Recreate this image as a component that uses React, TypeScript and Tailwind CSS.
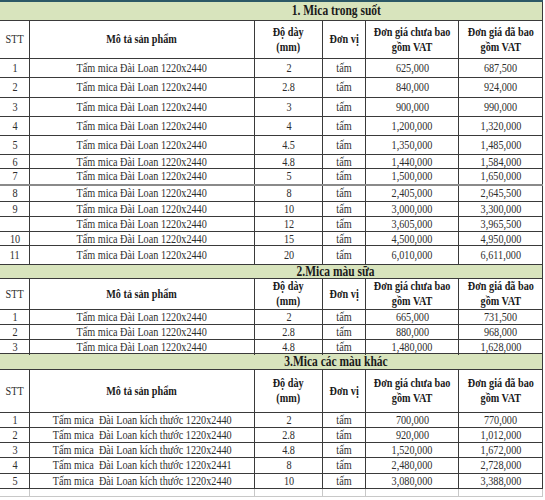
type Row = { stt: string; desc: string; thick: string; price: string; vat: string; h: string };

const cols = "grid grid-cols-[30px_225px_68px_43px_93px_84px]";

const mica1: Row[] = [
  { stt: "1", desc: "Tấm mica Đài Loan 1220x2440", thick: "2", price: "625,000", vat: "687,500", h: "h-[19px]" },
  { stt: "2", desc: "Tấm mica Đài Loan 1220x2440", thick: "2.8", price: "840,000", vat: "924,000", h: "h-[20px]" },
  { stt: "3", desc: "Tấm mica Đài Loan 1220x2440", thick: "3", price: "900,000", vat: "990,000", h: "h-[19px]" },
  { stt: "4", desc: "Tấm mica Đài Loan 1220x2440", thick: "4", price: "1,200,000", vat: "1,320,000", h: "h-[19px]" },
  { stt: "5", desc: "Tấm mica Đài Loan 1220x2440", thick: "4.5", price: "1,350,000", vat: "1,485,000", h: "h-[19px]" },
  { stt: "6", desc: "Tấm mica Đài Loan 1220x2440", thick: "4.8", price: "1,440,000", vat: "1,584,000", h: "h-[14px]" },
  { stt: "7", desc: "Tấm mica Đài Loan 1220x2440", thick: "5", price: "1,500,000", vat: "1,650,000", h: "h-[17px]" },
  { stt: "8", desc: "Tấm mica Đài Loan 1220x2440", thick: "8", price: "2,405,000", vat: "2,645,500", h: "h-[16px]" },
  { stt: "9", desc: "Tấm mica Đài Loan 1220x2440", thick: "10", price: "3,000,000", vat: "3,300,000", h: "h-[15px]" },
  { stt: "", desc: "Tấm mica Đài Loan 1220x2440", thick: "12", price: "3,605,000", vat: "3,965,500", h: "h-[15px]" },
  { stt: "10", desc: "Tấm mica Đài Loan 1220x2440", thick: "15", price: "4,500,000", vat: "4,950,000", h: "h-[14px]" },
  { stt: "11", desc: "Tấm mica Đài Loan 1220x2440", thick: "20", price: "6,010,000", vat: "6,611,000", h: "h-[19px]" },
];

const mica2: Row[] = [
  { stt: "1", desc: "Tấm mica Đài Loan 1220x2440", thick: "2", price: "665,000", vat: "731,500", h: "h-[15px]" },
  { stt: "2", desc: "Tấm mica Đài Loan 1220x2440", thick: "2.8", price: "880,000", vat: "968,000", h: "h-[15px]" },
  { stt: "3", desc: "Tấm mica Đài Loan 1220x2440", thick: "4.8", price: "1,480,000", vat: "1,628,000", h: "h-[14px]" },
];

const mica3: Row[] = [
  { stt: "1", desc: "Tấm mica  Đài Loan kích thước 1220x2440", thick: "2", price: "700,000", vat: "770,000", h: "h-[15px]" },
  { stt: "2", desc: "Tấm mica  Đài Loan kích thước 1220x2440", thick: "2.8", price: "920,000", vat: "1,012,000", h: "h-[15px]" },
  { stt: "3", desc: "Tấm mica  Đài Loan kích thước 1220x2440", thick: "4.8", price: "1,520,000", vat: "1,672,000", h: "h-[15px]" },
  { stt: "4", desc: "Tấm mica  Đài Loan kích thước 1220x2441", thick: "8", price: "2,480,000", vat: "2,728,000", h: "h-[16px]" },
  { stt: "5", desc: "Tấm mica  Đài Loan kích thước 1220x2440", thick: "10", price: "3,080,000", vat: "3,388,000", h: "h-[15px]" },
];

// the source is a squeezed screenshot, so text is narrowed a bit
function Cell({ children, bold }: { children?: React.ReactNode; bold?: boolean }) {
  return (
    <div className="flex items-center justify-center border-r border-[#3a3a3a] text-center overflow-visible">
      <span
        className={`inline-block scale-x-[0.85] whitespace-pre leading-[15px] text-[12px] ${
          bold ? "font-bold text-[#1a1a1a]" : "text-[#2e2e2e]"
        }`}
      >
        {children}
      </span>
    </div>
  );
}

function Title({ text, h }: { text: string; h: string }) {
  return (
    <div className={`${h} flex items-center justify-center pl-[130px] bg-[#d8e4bd] border-b border-r border-[#3a3a3a]`}>
      <span className="inline-block scale-x-[0.82] whitespace-pre font-bold text-[14px] leading-[14px] text-[#1a1a1a]">
        {text}
      </span>
    </div>
  );
}

function Header({ h }: { h: string }) {
  return (
    <div className={`${cols} ${h} border-b border-[#3a3a3a]`}>
      <Cell>STT</Cell>
      <Cell bold>Mô tả sản phẩm</Cell>
      <Cell bold>{"Độ dày\n(mm)"}</Cell>
      <Cell bold>Đơn vị</Cell>
      <Cell bold>{"Đơn giá chưa bao\ngồm VAT"}</Cell>
      <Cell bold>{"Đơn giá đã bao\ngồm VAT"}</Cell>
    </div>
  );
}

function Rows({ rows }: { rows: Row[] }) {
  return (
    <>
      {rows.map((r, i) => (
        <div
          key={i}
          className={`${cols} ${r.h} border-b ${r.thick === "5" && rows === mica1 ? "border-[#8a8a8a] border-b-2" : "border-[#3a3a3a]"}`}
        >
          <Cell>{r.stt}</Cell>
          <Cell>{r.desc}</Cell>
          <Cell>{r.thick}</Cell>
          <Cell>tấm</Cell>
          <Cell>{r.price}</Cell>
          <Cell>{r.vat}</Cell>
        </div>
      ))}
    </>
  );
}

export default function App() {
  return (
    <div className="w-[545px] h-[500px] overflow-hidden bg-white font-['Liberation_Serif','Times_New_Roman',serif]">
      <div className="w-[543px]">
        <div className="h-[2px] bg-[#2c5866]" />
        <Title text="1. Mica trong suốt" h="h-[19px]" />
        <Header h="h-[38px]" />
        <Rows rows={mica1} />
        <Title text="2.Mica màu sữa" h="h-[14px]" />
        <Header h="h-[31px]" />
        <Rows rows={mica2} />
        <Title text="3.Mica các màu khác" h="h-[16px]" />
        <Header h="h-[43px]" />
        <Rows rows={mica3} />
        <div className={`${cols} h-[8px] border-b border-[#c8c8c8]`}>
          <div className="border-r border-[#c8c8c8]" />
          <div className="border-r border-[#c8c8c8]" />
          <div className="border-r border-[#c8c8c8]" />
          <div className="border-r border-[#c8c8c8]" />
          <div className="border-r border-[#c8c8c8]" />
          <div className="border-r border-[#c8c8c8]" />
        </div>
      </div>
    </div>
  );
}
